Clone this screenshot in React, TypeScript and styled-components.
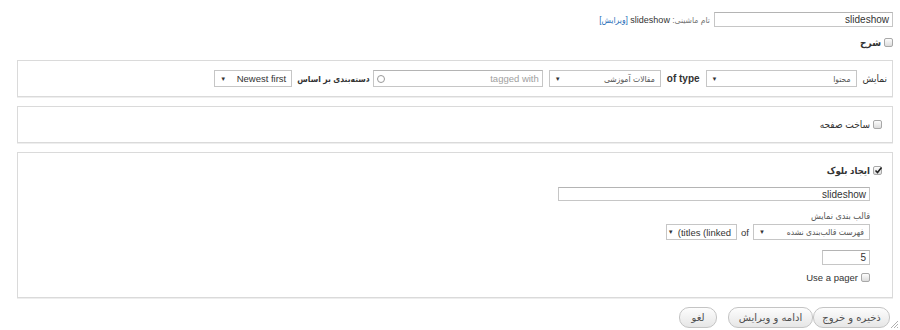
import styled, { createGlobalStyle } from "styled-components";

const GlobalStyle = createGlobalStyle`
  body {
    margin: 0;
    background: #fff;
    font-family: "Liberation Sans", "DejaVu Sans Condensed", "DejaVu Sans", sans-serif;
    color: #333;
  }
`;

const Page = styled.div`
  direction: rtl;
  position: relative;
  width: 900px;
  height: 330px;
  box-sizing: border-box;
  padding: 12px 7px 0 17px;
  font-size: 10px;
  overflow: hidden;
`;

const NameRow = styled.div`
  display: flex;
  align-items: center;
  gap: 4px;
  height: 15px;
`;

const TextInput = styled.div<{ $w: number; $h?: number }>`
  width: ${p => p.$w}px;
  height: ${p => p.$h ?? 15}px;
  box-sizing: border-box;
  border: 1px solid #c6c6c6;
  border-top-color: #b4b4b4;
  background: #fff;
  display: flex;
  align-items: center;
  justify-content: space-between;
  padding: 0 3px;
  font-size: 10px;
  color: #333;
  direction: rtl;
`;

const Placeholder = styled.span`
  color: #a0a0a0;
  font-size: 9.5px;
`;

const Throbber = styled.span`
  width: 6px;
  height: 6px;
  border: 1px solid #999;
  border-radius: 50%;
`;

const MachineName = styled.span`
  font-size: 8.5px;
  color: #777;
  b {
    font-weight: normal;
    font-size: 9px;
    color: #333;
  }
  a {
    color: #2a6fb8;
    text-decoration: none;
  }
`;

const CheckRow = styled.div<{ $mt?: number }>`
  display: flex;
  align-items: center;
  gap: 3px;
  height: 12px;
  margin-top: ${p => p.$mt ?? 0}px;
`;

const Box = styled.span`
  position: relative;
  width: 9px;
  height: 9px;
  box-sizing: border-box;
  border: 1px solid #a8a8a8;
  border-radius: 2px;
  background: linear-gradient(#fdfdfd, #dcdcdc);
  flex: none;
  svg {
    position: absolute;
    left: 0;
    top: -1px;
  }
`;

const CheckText = styled.span<{ $bold?: boolean; $latin?: boolean; $size?: number }>`
  font-size: ${p => p.$size ?? (p.$latin ? 9.5 : 10)}px;
  font-weight: ${p => (p.$bold ? "bold" : "normal")};
  color: #333;
`;

const Fieldset = styled.div<{ $h?: number; $pad: string; $mt: number }>`
  box-sizing: border-box;
  ${p => (p.$h ? `height: ${p.$h}px;` : "")}
  margin-top: ${p => p.$mt}px;
  padding: ${p => p.$pad};
  border: 1px solid #dadada;
  box-shadow: 0 1px 0 #eee;
  display: flex;
  flex-direction: column;
  justify-content: ${p => (p.$h ? "center" : "flex-start")};
`;

const InlineRow = styled.div<{ $gap?: number }>`
  display: flex;
  align-items: center;
  gap: ${p => p.$gap ?? 5}px;
`;

const Label = styled.span<{ $bold?: boolean; $latin?: boolean; $size?: number; $tight?: boolean }>`
  font-size: ${p => p.$size ?? (p.$latin ? 9.5 : 10)}px;
  font-weight: ${p => (p.$bold ? "bold" : "normal")};
  color: #333;
  white-space: nowrap;
  margin: ${p => (p.$tight ? "0 -3px 0 -1px" : "0")};
`;

const LatinBold = styled.span`
  font-size: 10px;
  font-weight: bold;
  color: #333;
`;

const SelectBox = styled.div<{ $w: number; $h?: number }>`
  width: ${p => p.$w}px;
  height: ${p => p.$h ?? 17}px;
  box-sizing: border-box;
  border: 1px solid #c6c6c6;
  background: #fff;
  display: flex;
  align-items: center;
  justify-content: space-between;
  padding: 0 5px;
  white-space: nowrap;
`;

const SelectValue = styled.span<{ $latin?: boolean }>`
  font-size: ${p => (p.$latin ? 9.5 : 8.5)}px;
  color: ${p => (p.$latin ? "#333" : "#555")};
  direction: ${p => (p.$latin ? "ltr" : "rtl")};
`;

const Arrow = styled.span`
  flex: none;
  font-size: 6px;
  color: #333;
  margin-right: 4px;
`;

const Nested = styled.div`
  padding-right: 12px;
  display: flex;
  flex-direction: column;
  align-items: flex-start;
`;

const SmallLabel = styled.div`
  margin-top: 9px;
  height: 12px;
  line-height: 12px;
  font-size: 9px;
  color: #555;
`;

const Spacer = styled.div<{ $h: number }>`
  height: ${p => p.$h}px;
`;

const Buttons = styled.div`
  display: flex;
  align-items: center;
  margin-top: 9px;
  padding-right: 3px;
`;

const Button = styled.button<{ $w: number; $gap?: number }>`
  width: ${p => p.$w}px;
  height: 21px;
  margin-left: ${p => p.$gap ?? 0}px;
  padding: 0;
  border: 1px solid #c4c4c4;
  border-radius: 10px;
  background: linear-gradient(#fdfdfd, #e6e6e6);
  color: #4f4f4f;
  font-family: "DejaVu Sans", sans-serif;
  font-size: 10px;
  direction: rtl;
`;

const Grip = styled.svg`
  position: absolute;
  right: 1px;
  bottom: 1px;
`;

function Checkbox({ checked }: { checked?: boolean }) {
  return (
    <Box>
      {checked && (
        <svg width="9" height="9" viewBox="0 0 9 9">
          <path d="M1.5 4.5 L3.5 6.5 L7.5 1.5" fill="none" stroke="#222" strokeWidth="1.6" />
        </svg>
      )}
    </Box>
  );
}

function Select({ w, value, latin, h }: { w: number; value: string; latin?: boolean; h?: number }) {
  return (
    <SelectBox $w={w} $h={h}>
      <SelectValue $latin={latin}>{value}</SelectValue>
      <Arrow>▼</Arrow>
    </SelectBox>
  );
}

export default function App() {
  return (
    <>
      <GlobalStyle />
      <Page>
        <NameRow>
          <TextInput $w={179}>slideshow</TextInput>
          <MachineName>
            تام ماشینی: <b>slideshow</b> <a href="#">[ویرایش]</a>
          </MachineName>
        </NameRow>

        <CheckRow $mt={9}>
          <Checkbox />
          <CheckText $bold>شرح</CheckText>
        </CheckRow>

        <Fieldset $h={37} $pad="0 5px" $mt={12}>
          <InlineRow $gap={6}>
            <Label>نمایش</Label>
            <Select w={151} value="محتوا" />
            <LatinBold>of type</LatinBold>
            <Select w={112} value="مقالات آموزشی" />
            <TextInput $w={170} $h={17}>
              <Placeholder>tagged with</Placeholder>
              <Throbber />
            </TextInput>
            <Label $bold $size={8.5} $tight>دسته‌بندی بر اساس</Label>
            <Select w={78} value="Newest first" latin />
          </InlineRow>
        </Fieldset>

        <Fieldset $h={37} $pad="0 10px" $mt={9}>
          <CheckRow>
            <Checkbox />
            <CheckText>ساخت صفحه</CheckText>
          </CheckRow>
        </Fieldset>

        <Fieldset $pad="11px 10px 14px" $mt={9}>
          <CheckRow>
            <Checkbox checked />
            <CheckText $bold $size={9.5}>ایجاد بلوک</CheckText>
          </CheckRow>
          <Nested>
            <Spacer $h={11} />
            <TextInput $w={312} $h={14}>slideshow</TextInput>
            <SmallLabel>قالب بندی نمایش</SmallLabel>
            <InlineRow $gap={4} style={{ marginTop: 2 }}>
              <Select w={117} h={16} value="فهرست قالب‌بندی نشده" />
              <Label $latin>of</Label>
              <Select w={71} h={16} value="(titles (linked" latin />
            </InlineRow>
            <Spacer $h={10} />
            <TextInput $w={48} $h={15}>5</TextInput>
            <CheckRow $mt={6}>
              <Checkbox />
              <CheckText $latin>Use a pager</CheckText>
            </CheckRow>
          </Nested>
        </Fieldset>

        <Buttons>
          <Button $w={77}>ذخیره و خروج</Button>
          <Button $w={85} $gap={11}>ادامه و ویرایش</Button>
          <Button $w={38}>لغو</Button>
        </Buttons>

        <Grip width="9" height="9" viewBox="0 0 9 9">
          <path d="M8 1 L1 8 M8 4 L4 8 M8 7 L7 8" stroke="#b0b0b0" strokeWidth="1" />
        </Grip>
      </Page>
    </>
  );
}
